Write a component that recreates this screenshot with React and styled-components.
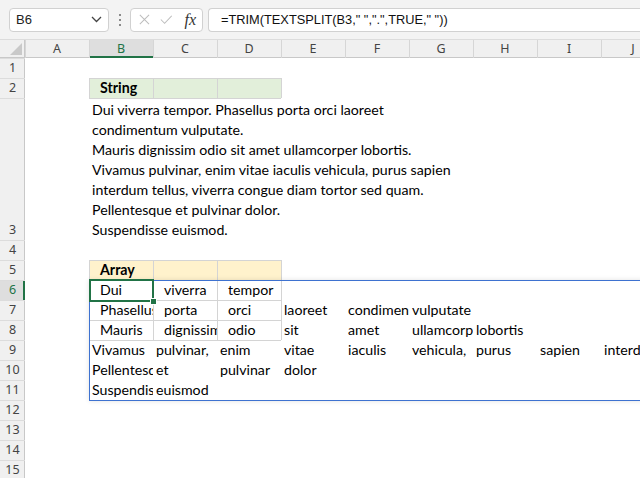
import React from "react";
import styled, { createGlobalStyle, css } from "styled-components";

const GlobalStyle = createGlobalStyle`
  html, body { margin: 0; padding: 0; background: #fff; }
  body { font-family: "Liberation Sans", Arial, sans-serif; }
`;

const COLS = ["A", "B", "C", "D", "E", "F", "G", "H", "I", "J"];
const ROWS = Array.from({ length: 15 }, (_, i) => i + 1);
const GREEN = "#217346";
const LINE = "#d4d4d4";

const STRING_TEXT = [
  "Dui viverra tempor. Phasellus porta orci laoreet",
  "condimentum vulputate.",
  "Mauris dignissim odio sit amet ullamcorper lobortis.",
  "Vivamus pulvinar, enim vitae iaculis vehicula, purus sapien",
  "interdum tellus, viverra congue diam tortor sed quam.",
  "Pellentesque et pulvinar dolor.",
  "Suspendisse euismod.",
].join("\n");

const SPILL = [
  ["Dui", "viverra", "tempor"],
  ["Phasellus", "porta", "orci", "laoreet", "condimentum", "vulputate"],
  ["Mauris", "dignissim", "odio", "sit", "amet", "ullamcorper", "lobortis"],
  ["Vivamus", "pulvinar,", "enim", "vitae", "iaculis", "vehicula,", "purus", "sapien", "interdum"],
  ["Pellentesque", "et", "pulvinar", "dolor"],
  ["Suspendisse", "euismod"],
];

// build the cell map
const cells = {};
["B", "C", "D"].forEach((c) => {
  cells[c + 2] = { fill: "#e2efda", box: true, indent: true };
  cells[c + 5] = { fill: "#fff2cc", box: true, indent: true };
  [6, 7, 8].forEach((r) => (cells[c + r] = { box: true, indent: true }));
});
cells.B2.text = "String";
cells.B2.bold = true;
cells.B5.text = "Array";
cells.B5.bold = true;
cells.B3 = { text: STRING_TEXT };
SPILL.forEach((row, ri) => {
  const r = ri + 6;
  COLS.slice(1).forEach((c, ci) => {
    const key = c + r;
    cells[key] = { ...(cells[key] || {}), text: row[ci] || "", clip: true };
  });
});

const Page = styled.div`
  width: 640px;
  height: 478px;
  overflow: hidden;
  display: flex;
  flex-direction: column;
  background: #fff;
`;

const FormulaBar = styled.div`
  display: flex;
  align-items: center;
  height: 39px;
  padding: 0 0 0 9px;
  box-sizing: border-box;
  background: #f3f3f3;
  flex-shrink: 0;
`;

const Box = styled.div`
  height: 24px;
  box-sizing: border-box;
  background: #fff;
  border: 1px solid #d1d1d1;
  border-radius: 4px;
  display: flex;
  align-items: center;
`;

const NameBox = styled(Box)`
  width: 100px;
  padding: 0 6px 0 6px;
  justify-content: space-between;
  font-size: 13px;
  color: #222;
`;

const Grip = styled.div`
  width: 21px;
  display: flex;
  flex-direction: column;
  align-items: center;
  gap: 3px;
  span {
    width: 2px;
    height: 2px;
    background: #8a8a8a;
  }
`;

const FnBox = styled(Box)`
  width: 73px;
  padding: 0 6px 0 8px;
  gap: 10px;
`;

const Fx = styled.span`
  font-family: "Liberation Serif", "DejaVu Serif", serif;
  font-style: italic;
  font-size: 16px;
  color: #333;
  margin-left: 2px;
`;

const FormulaInput = styled(Box)`
  flex: 1;
  margin-left: 5px;
  padding-left: 12px;
  border-right: none;
  border-radius: 4px 0 0 4px;
  font-size: 12.8px;
  color: #111;
  white-space: pre;
`;

const Sheet = styled.div`
  display: grid;
  grid-template-columns: 25px repeat(10, 64px);
  grid-template-rows: 19px 20px 20px 142px repeat(12, 20px);
  width: 665px;
  flex: 1;
`;

const Corner = styled.div`
  grid-row: 1;
  grid-column: 1;
  background: #f0f0f0;
  box-shadow: inset 0 1px 0 #dcdcdc, inset -1px -1px 0 #c8c8c8;
  display: flex;
  align-items: flex-end;
  justify-content: flex-end;
  padding: 0 3px 3px 0;
  box-sizing: border-box;
`;

const headText = css`
  font-family: "Noto Sans", "DejaVu Sans", sans-serif;
  font-size: 12.5px;
  display: flex;
  align-items: center;
  justify-content: center;
  box-sizing: border-box;
`;

const ColHead = styled.div`
  ${headText}
  grid-row: 1;
  grid-column: ${(p) => p.$col};
  background: ${(p) => (p.$active ? "#dedede" : "#f0f0f0")};
  color: ${(p) => (p.$active ? GREEN : "#444")};
  box-shadow: inset 0 1px 0 #dcdcdc, inset 1px 0 0 #d6d6d6,
    inset 0 ${(p) => (p.$active ? "-2px 0 " + GREEN : "-1px 0 #c8c8c8")};
`;

const RowHead = styled.div`
  ${headText}
  grid-column: 1;
  grid-row: ${(p) => p.$row};
  background: ${(p) => (p.$active ? "#dedede" : "#f0f0f0")};
  color: ${(p) => (p.$active ? GREEN : "#444")};
  align-items: ${(p) => (p.$tall ? "flex-end" : "center")};
  box-shadow: inset 0 1px 0 #dcdcdc,
    inset ${(p) => (p.$active ? "-2px 0 0 " + GREEN : "-1px 0 0 #c8c8c8")};
  line-height: 20px;
`;

const Cell = styled.div`
  grid-row: ${(p) => p.$row};
  grid-column: ${(p) => p.$col};
  box-sizing: border-box;
  min-width: 0;
  font-family: "Lato", "Liberation Sans", sans-serif;
  font-size: 14.2px;
  line-height: 20px;
  color: #000;
  white-space: pre;
  padding-left: ${(p) => (p.$indent ? "11px" : "3px")};
  font-weight: ${(p) => (p.$bold ? 700 : 400)};
  background: ${(p) => p.$fill || "transparent"};
  overflow: ${(p) => (p.$clip ? "hidden" : "visible")};
  display: flex;
  align-items: flex-end;
  ${(p) =>
    p.$box &&
    css`
      box-shadow: inset 1px 0 0 ${LINE}, 1px 0 0 ${LINE}, inset 0 1px 0 ${LINE},
        0 1px 0 ${LINE};
    `}
`;

const SpillFrame = styled.div`
  grid-row: 7 / 13;
  grid-column: 3 / -1;
  margin-bottom: -1px;
  border: 1px solid #3e72d0;
  border-right: none;
  box-shadow: 0 0 5px rgba(0, 0, 0, 0.12);
  pointer-events: none;
  z-index: 2;
`;

const Selection = styled.div`
  grid-row: 7;
  grid-column: 3;
  position: relative;
  z-index: 3;
  pointer-events: none;
  &::before {
    content: "";
    position: absolute;
    left: 0;
    top: -1px;
    right: -1px;
    bottom: -2px;
    border: 2px solid ${GREEN};
  }
  &::after {
    content: "";
    position: absolute;
    right: -3px;
    bottom: -4px;
    width: 5px;
    height: 5px;
    background: ${GREEN};
    box-shadow: 0 0 0 1px #fff;
  }
`;

const Chevron = () => (
  <svg width="11" height="7" viewBox="0 0 11 7">
    <polyline points="1,1 5.5,5.5 10,1" fill="none" stroke="#444" strokeWidth="1.3" />
  </svg>
);

const Cross = () => (
  <svg width="13" height="13" viewBox="0 0 13 13">
    <path d="M1 1 L12 12 M12 1 L1 12" stroke="#bdbdbd" strokeWidth="1.2" />
  </svg>
);

const Check = () => (
  <svg width="15" height="11" viewBox="0 0 15 11">
    <polyline points="1,5.5 5.5,10 14,1" fill="none" stroke="#bdbdbd" strokeWidth="1.2" />
  </svg>
);

const CornerMark = () => (
  <svg width="12" height="12" viewBox="0 0 12 12">
    <polygon points="12,0 12,12 0,12" fill="#c9c9c9" />
  </svg>
);

export default function App() {
  return (
    <>
      <GlobalStyle />
      <Page>
        <FormulaBar>
          <NameBox>
            <span>B6</span>
            <Chevron />
          </NameBox>
          <Grip>
            <span />
            <span />
            <span />
          </Grip>
          <FnBox>
            <Cross />
            <Check />
            <Fx>fx</Fx>
          </FnBox>
          <FormulaInput>=TRIM(TEXTSPLIT(B3," ",".",TRUE," "))</FormulaInput>
        </FormulaBar>
        <Sheet>
          <Corner>
            <CornerMark />
          </Corner>
          {COLS.map((c, ci) => (
            <ColHead key={c} $col={ci + 2} $active={c === "B"}>
              {c}
            </ColHead>
          ))}
          {ROWS.map((r) => (
            <React.Fragment key={r}>
              <RowHead $row={r + 1} $active={r === 6} $tall={r === 3}>
                {r}
              </RowHead>
              {COLS.map((c, ci) => {
                const d = cells[c + r] || {};
                return (
                  <Cell
                    key={c + r}
                    $row={r + 1}
                    $col={ci + 2}
                    $fill={d.fill}
                    $box={d.box}
                    $indent={d.indent}
                    $bold={d.bold}
                    $clip={d.clip}
                  >
                    {d.text}
                  </Cell>
                );
              })}
            </React.Fragment>
          ))}
          <SpillFrame />
          <Selection />
        </Sheet>
      </Page>
    </>
  );
}
